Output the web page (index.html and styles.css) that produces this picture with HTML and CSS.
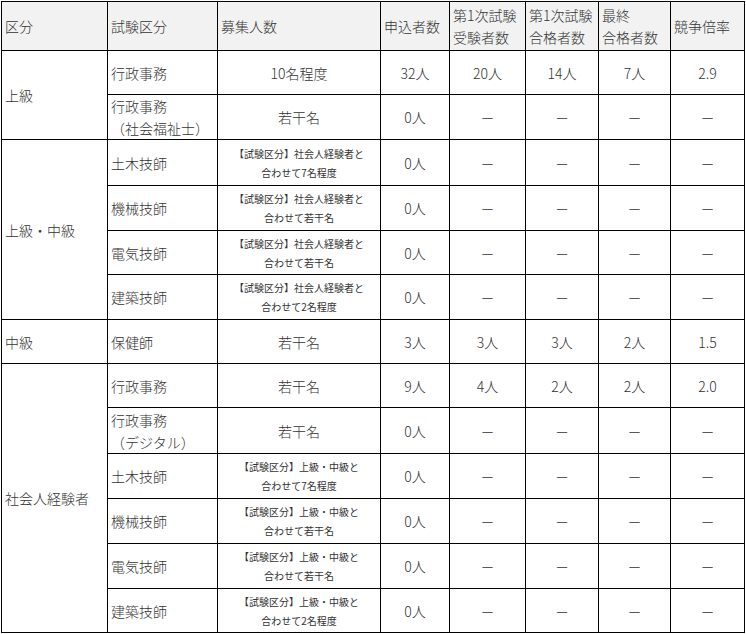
FILE: index.html
```html
<!DOCTYPE html>
<html lang="ja">
<head>
<meta charset="utf-8">
<title>試験実施状況</title>
<link rel="stylesheet" href="styles.css">
</head>
<body>
<table class="result">
  <colgroup>
    <col class="c1"><col class="c2"><col class="c3"><col class="c4"><col class="c5"><col class="c6"><col class="c7"><col class="c8">
  </colgroup>
  <thead>
    <tr class="h49">
      <th>区分</th>
      <th>試験区分</th>
      <th>募集人数</th>
      <th>申込者数</th>
      <th>第1次試験<br>受験者数</th>
      <th>第1次試験<br>合格者数</th>
      <th>最終<br>合格者数</th>
      <th>競争倍率</th>
    </tr>
  </thead>
  <tbody>
    <tr class="h44">
      <td class="l" rowspan="2">上級</td>
      <td class="l">行政事務</td>
      <td>10名程度</td>
      <td>32人</td><td>20人</td><td>14人</td><td>7人</td><td>2.9</td>
    </tr>
    <tr class="h45">
      <td class="l">行政事務<br>（社会福祉士）</td>
      <td>若干名</td>
      <td>0人</td><td>－</td><td>－</td><td>－</td><td>－</td>
    </tr>
    <tr class="h46">
      <td class="l" rowspan="4">上級・中級</td>
      <td class="l">土木技師</td>
      <td class="s">【試験区分】社会人経験者と<br>合わせて7名程度</td>
      <td>0人</td><td>－</td><td>－</td><td>－</td><td>－</td>
    </tr>
    <tr class="h45">
      <td class="l">機械技師</td>
      <td class="s">【試験区分】社会人経験者と<br>合わせて若干名</td>
      <td>0人</td><td>－</td><td>－</td><td>－</td><td>－</td>
    </tr>
    <tr class="h44">
      <td class="l">電気技師</td>
      <td class="s">【試験区分】社会人経験者と<br>合わせて若干名</td>
      <td>0人</td><td>－</td><td>－</td><td>－</td><td>－</td>
    </tr>
    <tr class="h45">
      <td class="l">建築技師</td>
      <td class="s">【試験区分】社会人経験者と<br>合わせて2名程度</td>
      <td>0人</td><td>－</td><td>－</td><td>－</td><td>－</td>
    </tr>
    <tr class="h44">
      <td class="l">中級</td>
      <td class="l">保健師</td>
      <td>若干名</td>
      <td>3人</td><td>3人</td><td>3人</td><td>2人</td><td>1.5</td>
    </tr>
    <tr class="h44">
      <td class="l" rowspan="6">社会人経験者</td>
      <td class="l">行政事務</td>
      <td>若干名</td>
      <td>9人</td><td>4人</td><td>2人</td><td>2人</td><td>2.0</td>
    </tr>
    <tr class="h46">
      <td class="l">行政事務<br>（デジタル）</td>
      <td>若干名</td>
      <td>0人</td><td>－</td><td>－</td><td>－</td><td>－</td>
    </tr>
    <tr class="h45">
      <td class="l">土木技師</td>
      <td class="s">【試験区分】上級・中級と<br>合わせて7名程度</td>
      <td>0人</td><td>－</td><td>－</td><td>－</td><td>－</td>
    </tr>
    <tr class="h45">
      <td class="l">機械技師</td>
      <td class="s">【試験区分】上級・中級と<br>合わせて若干名</td>
      <td>0人</td><td>－</td><td>－</td><td>－</td><td>－</td>
    </tr>
    <tr class="h45">
      <td class="l">電気技師</td>
      <td class="s">【試験区分】上級・中級と<br>合わせて若干名</td>
      <td>0人</td><td>－</td><td>－</td><td>－</td><td>－</td>
    </tr>
    <tr class="h44">
      <td class="l">建築技師</td>
      <td class="s">【試験区分】上級・中級と<br>合わせて2名程度</td>
      <td>0人</td><td>－</td><td>－</td><td>－</td><td>－</td>
    </tr>
  </tbody>
</table>
</body>
</html>
```

FILE: styles.css
```css
html, body {
  margin: 0;
  padding: 0;
  background: #ffffff;
}

body {
  padding: 1px 0 0 1px;
  font-family: "Noto Sans CJK JP", "Noto Sans", sans-serif;
  font-weight: 300;
  color: #333333;
}

.result {
  border-collapse: collapse;
  table-layout: fixed;
  width: 744px;
  font-size: 14px;
  line-height: 22px;
}

.c1 { width: 106px; }
.c2 { width: 110px; }
.c3 { width: 163px; }
.c4 { width: 69px; }
.c5 { width: 76px; }
.c6 { width: 73px; }
.c7 { width: 72px; }
.c8 { width: 74px; }

.result th,
.result td {
  border: 1px solid #000000;
  padding: 0 3px;
  vertical-align: middle;
}

.result th {
  background: #f2f2f2;
  font-weight: 300;
  text-align: left;
}

.result td {
  text-align: center;
}

.result td.l {
  text-align: left;
}

.result td.s {
  font-size: 10px;
  line-height: 19px;
  font-weight: 400;
}

.h49 { height: 49px; }
.h44 { height: 44px; }
.h45 { height: 45px; }
.h46 { height: 46px; }
```
